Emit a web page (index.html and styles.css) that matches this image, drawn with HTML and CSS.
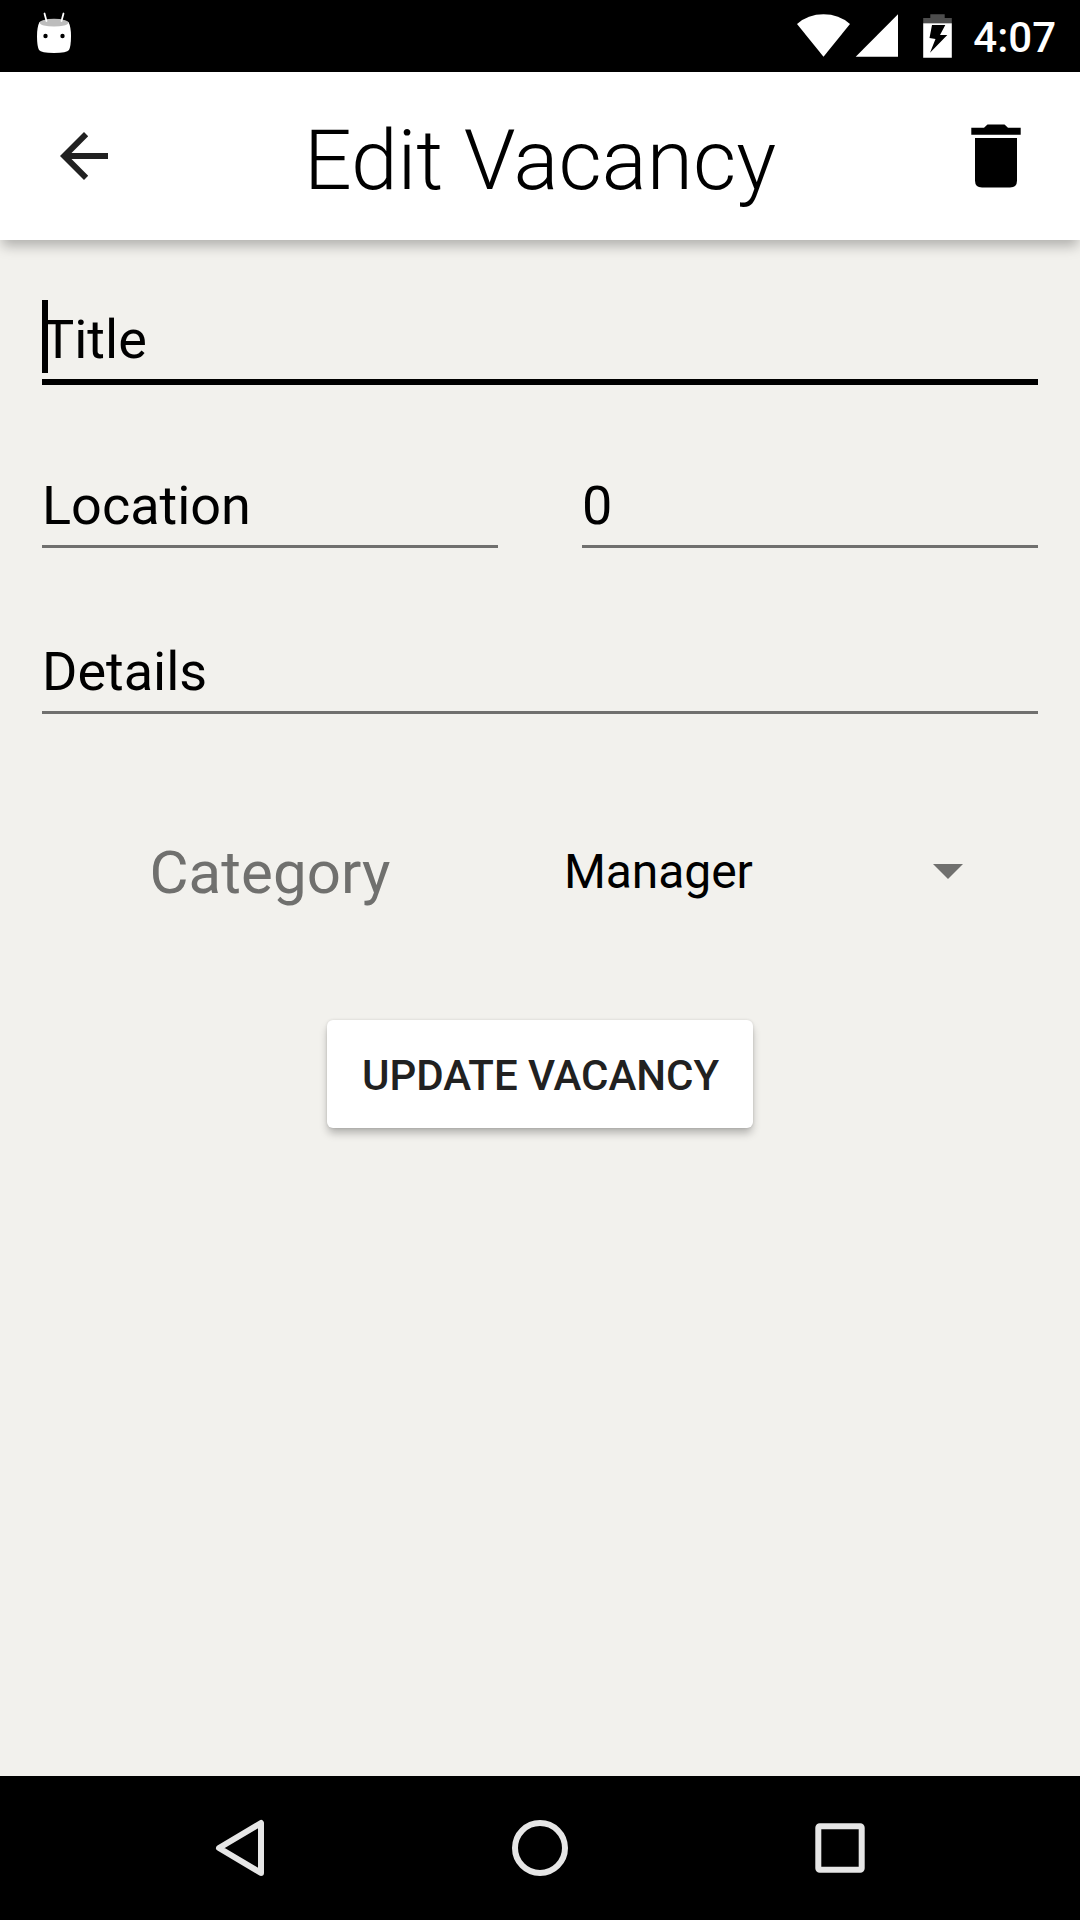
FILE: index.html
```html
<!DOCTYPE html>
<html lang="en">
<head>
<meta charset="utf-8">
<title>Edit Vacancy</title>
<link rel="stylesheet" href="styles.css">
</head>
<body>
<div class="screen">
  <div class="status-bar">
    <svg class="robot" width="36" height="42" viewBox="36 12 36 42">
      <path d="M39.5 22Q54 16 68.500 22Q71 27 71 36Q71 46 69 50Q67 53 54 53Q41 53 39 50Q37 46 37 36Q37 27 39.500 22Z" fill="#fff"/>
      <ellipse cx="54" cy="22.700" rx="14.300" ry="3.900" fill="#bdbdbd"/>
      <path d="M44.500 13.500L46.500 21M63.500 13.500L61.500 21" stroke="#fff" stroke-width="1.800" stroke-linecap="round"/>
      <circle cx="45.500" cy="36" r="2.200"/><circle cx="62.500" cy="36" r="2.200"/>
    </svg>
    <div class="status-icons">
      <svg width="156" height="46" viewBox="796 13 156 46">
        <path d="M797 24Q808 14.300 823.500 14.300T850 24L823.500 56.700Z" fill="#fff"/>
        <path d="M855.700 56.700L898 14.300V56.700Z" fill="#fff"/>
        <path d="M930.300 14.300H944.700V18H951.800V23.300H923.200V18H930.300Z" fill="#4d4d4d"/>
        <path d="M923.200 23.300H951.800V57.700H923.200Z" fill="#fff"/>
        <path d="M932 25H945.300L940 35H947.300L930 52.700L935.500 39L929.500 38Z" fill="#000"/>
      </svg>
      <span class="clock">4:07</span>
    </div>
  </div>

  <header class="app-bar">
    <svg class="back" width="48" height="48" viewBox="0 0 48 48"><path d="M48 21H11.500L28.200 4.200L24 0L0 24L24 48L28.200 43.800L11.500 27H48Z" fill="#212121"/></svg>
    <h1 class="title">Edit Vacancy</h1>
    <svg class="delete" width="50" height="64" viewBox="0 0 50 64">
      <path d="M13 3.800L16.500 .5H33.500L37 3.800H49.700V10.700H.3V3.800Z"/>
      <path d="M4 14H46V56.500Q46 63.500 39 63.500H11Q4 63.500 4 56.500Z"/>
    </svg>
  </header>

  <main class="form">
    <div class="field focused"><i class="caret"></i>Title</div>
    <div class="pair">
      <div class="field">Location</div>
      <div class="field">0</div>
    </div>
    <div class="field">Details</div>
    <div class="category">
      <span class="label">Category</span>
      <div class="spinner">
        <span>Manager</span>
        <svg width="30" height="15" viewBox="0 0 30 15"><path d="M0 0H30L15 15Z" fill="#70706e"/></svg>
      </div>
    </div>
    <button class="update">UPDATE VACANCY</button>
  </main>

  <nav class="nav-bar">
    <svg width="60" height="60" viewBox="210 1818 60 60"><path d="M261 1823V1873L219 1848Z" fill="none" stroke="#e6e6e6" stroke-width="6" stroke-linejoin="round"/></svg>
    <svg width="60" height="60" viewBox="0 0 60 60"><circle cx="30" cy="30" r="25" fill="none" stroke="#e6e6e6" stroke-width="6"/></svg>
    <svg width="60" height="60" viewBox="0 0 60 60"><rect x="8.300" y="8.300" width="43.400" height="43.400" rx="1.500" fill="none" stroke="#e6e6e6" stroke-width="6"/></svg>
  </nav>
</div>
</body>
</html>
```
FILE: styles.css
```css
* { box-sizing: border-box; }
body { margin: 0; font-family: Roboto, "Liberation Sans", sans-serif; color: #000; }
svg { display: block; flex: none; }
.screen { width: 1080px; height: 1920px; display: flex; flex-direction: column; background: #f2f1ed; }

.status-bar { height: 72px; background: #000; display: flex; justify-content: space-between; padding: 0 24px 0 36px; }
.robot { margin-top: 12px; }
.status-icons { display: flex; gap: 21px; }
.status-icons svg { margin-top: 13px; }
.clock { color: #fff; font-size: 42px; font-weight: 500; line-height: 75px; }

.app-bar { height: 168px; background: #fff; display: flex; align-items: center; justify-content: space-between; padding: 0 59px 0 60px; box-shadow: 0 8px 12px -2px rgba(0, 0, 0, .27); }
.title { margin: 0; padding: 9px 0 0 1px; font-size: 84px; font-weight: 300; line-height: 99px; letter-spacing: -.06px; white-space: nowrap; }

.form { flex: 1; display: flex; flex-direction: column; padding: 60px 42px 0; }
.field { position: relative; height: 79px; box-sizing: content-box; font-size: 54px; line-height: 79px; border-bottom: 3px solid #70706e; margin-bottom: 84px; }
.field.focused { border-bottom: 6px solid #000; margin-bottom: 81px; }
.caret { position: absolute; left: 0; top: 0; width: 6px; height: 73px; background: #000; }
.pair { display: grid; grid-template-columns: 1fr 1fr; gap: 84px; }

.category { display: grid; grid-template-columns: 1fr 1fr; align-items: center; height: 144px; margin: 2px -42px 0; }
.label { font-size: 60px; letter-spacing: .1px; color: #70706e; text-align: center; }
.spinner { display: flex; align-items: center; justify-content: space-between; padding: 0 117px 0 24px; margin-bottom: 1px; font-size: 48px; letter-spacing: -.08px; }

.update { align-self: center; width: 426px; height: 108px; margin-top: 76px; padding: 3px 0 0 1px; border: 0; border-radius: 6px; background: #fff; color: #212121; font: 500 42px/105px Roboto, "Liberation Sans", sans-serif; letter-spacing: -.04px; white-space: nowrap; box-shadow: 0 6px 8px -1px rgba(0, 0, 0, .27), 0 0 3px rgba(0, 0, 0, .12); }

.nav-bar { height: 144px; background: #000; display: flex; align-items: center; justify-content: center; gap: 240px; }
```
